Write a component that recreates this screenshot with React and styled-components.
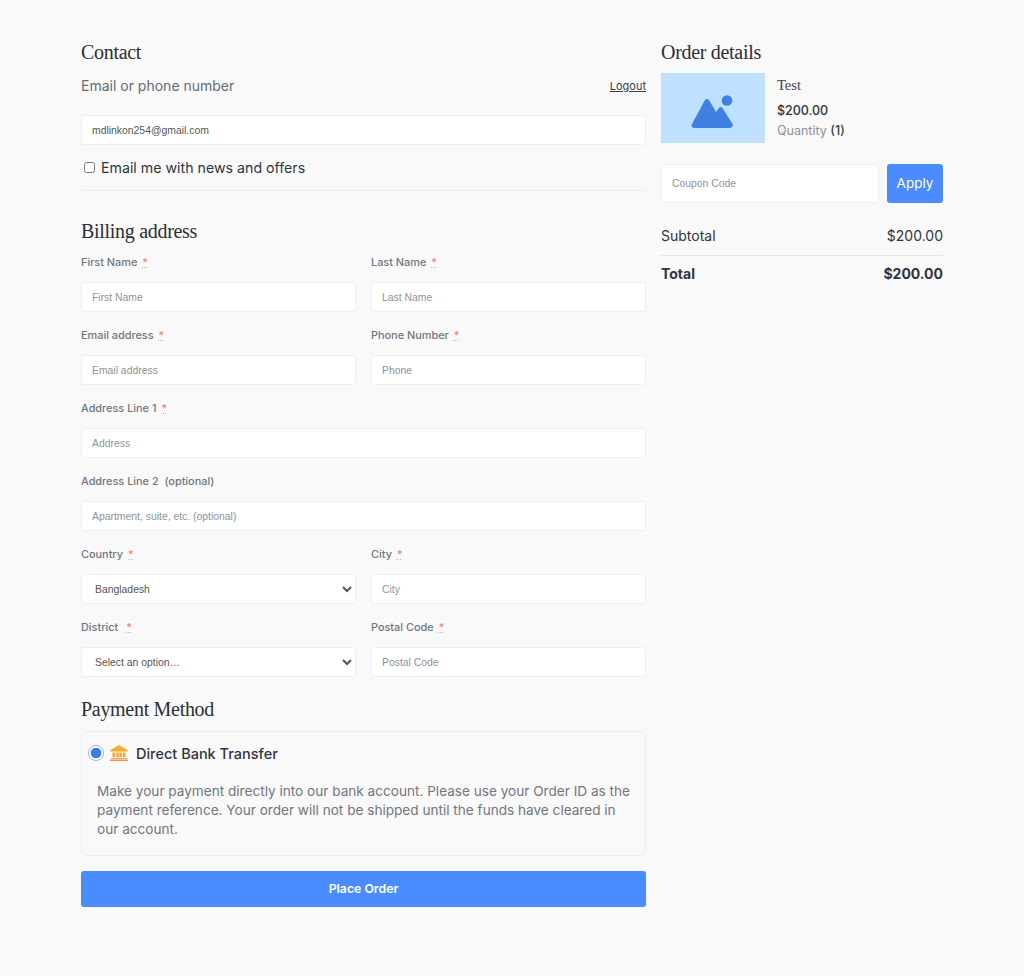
import styled, { createGlobalStyle } from 'styled-components';

const GlobalStyle = createGlobalStyle`
  * { box-sizing: border-box; }
  body {
    margin: 0;
    background: #f9f9f9;
    font-family: Inter, "Liberation Sans", sans-serif;
    color: #2f3542;
  }
`;

const Page = styled.div`
  width: 1024px;
  height: 976px;
  padding: 40px 81px 0;
  display: flex;
  align-items: flex-start;
  gap: 15px;
`;

const Main = styled.div`
  width: 565px;
`;

const Side = styled.aside`
  width: 282px;
`;

const Heading = styled.h2`
  margin: 0;
  font-family: "Liberation Serif", serif;
  font-weight: 400;
  font-size: 20px;
  letter-spacing: -0.3px;
  line-height: 24px;
  color: #2b2f38;
`;

const ContactRow = styled.div`
  margin-top: 10px;
  height: 22px;
  display: flex;
  justify-content: space-between;
  align-items: center;
`;

const ContactLabel = styled.span`
  font-size: 14px;
  color: #646b76;
`;

const Logout = styled.a`
  padding-top: 2px;
  font-size: 11px;
  color: #3a404b;
  text-decoration: underline;
`;

const Field = styled.input`
  display: block;
  width: 100%;
  height: 30px;
  padding: 0 10px;
  border: 1px solid #efefef;
  border-radius: 3px;
  background: #fff;
  font-family: "Liberation Sans", sans-serif;
  font-size: 10.4px;
  color: #555;
  outline: none;
  &::placeholder {
    color: #8f9298;
    opacity: 1;
  }
`;

const EmailField = styled(Field)`
  margin-top: 19px;
`;

const CheckRow = styled.label`
  margin-top: 11px;
  height: 22px;
  padding-left: 3px;
  display: flex;
  align-items: center;
  gap: 6px;
  font-size: 14.2px;
  color: #2f3542;
`;

const Check = styled.input`
  margin: 0;
  width: 11px;
  height: 11px;
`;

const Divider = styled.hr`
  margin: 12px 0 28px;
  border: 0;
  border-top: 1px solid #eeeeee;
`;

const FormGrid = styled.div`
  margin-top: 9px;
  display: grid;
  grid-template-columns: 275px 275px;
  column-gap: 15px;
  row-gap: 13px;
`;

const FormItem = styled.div`
  grid-column: ${(p) => (p.$wide ? '1 / -1' : 'auto')};
`;

const Label = styled.label`
  display: block;
  height: 20px;
  margin-bottom: 10px;
  font-size: 10.9px;
  font-weight: 500;
  line-height: 20px;
  color: #70767f;
  white-space: pre;
`;

const Required = styled.abbr`
  margin-left: 5px;
  color: #e8866a;
  text-decoration: underline dotted #bbb;
`;

const SelectBox = styled.select`
  display: block;
  width: 100%;
  height: 30px;
  padding: 0 0 0 9px;
  border: 1px solid #efefef;
  border-radius: 3px;
  background: #fff;
  font-family: "Liberation Sans", sans-serif;
  font-size: 10.4px;
  color: #555;
  outline: none;
`;

const PaymentHeading = styled(Heading)`
  margin-top: 20px;
`;

const PayCard = styled.div`
  margin-top: 10px;
  height: 125px;
  padding: 12px 6px;
  border: 1px solid #eeeeee;
  border-radius: 6px;
`;

const PayHead = styled.div`
  display: flex;
  align-items: center;
  height: 18px;
`;

const Radio = styled.input`
  appearance: none;
  margin: 0;
  width: 16px;
  height: 16px;
  border: 1.5px solid #8db8ff;
  border-radius: 50%;
  background: radial-gradient(circle, #3d7fe0 0 5px, #fff 5.6px);
`;

const BankIcon = styled.svg`
  margin-left: 6px;
  width: 18px;
  height: 16px;
`;

const PayTitle = styled.span`
  margin-left: 8px;
  font-size: 14.5px;
  font-weight: 500;
  color: #2f3542;
`;

const PayText = styled.p`
  margin: 20px 8px 0 9px;
  font-size: 13.6px;
  line-height: 19px;
  color: #71767f;
`;

const PlaceOrder = styled.button`
  display: block;
  width: 100%;
  height: 36px;
  margin-top: 15px;
  padding: 0 0 2px;
  border: 0;
  border-radius: 3px;
  background: #4a8cff;
  color: #fff;
  font-family: Inter, sans-serif;
  font-size: 12.3px;
  font-weight: 600;
`;

const Product = styled.div`
  margin-top: 9px;
  display: flex;
  gap: 12px;
`;

const Thumb = styled.div`
  width: 104px;
  height: 70px;
  padding: 7px 2px 0 0;
  background: #bfe0ff;
  display: flex;
  align-items: center;
  justify-content: center;
`;

const ProductInfo = styled.div`
  padding-top: 3px;
`;

const ProductName = styled.div`
  font-family: "Liberation Serif", serif;
  font-size: 14.5px;
  line-height: 18px;
  color: #3a3f48;
`;

const ProductPrice = styled.div`
  margin-top: 8px;
  font-size: 12.5px;
  font-weight: 500;
  line-height: 18px;
  color: #2f3542;
`;

const Quantity = styled.div`
  margin-top: 2px;
  font-size: 12.5px;
  line-height: 18px;
  color: #8d929b;
  & b {
    font-weight: 500;
    color: #3a3f48;
  }
`;

const CouponRow = styled.div`
  margin-top: 21px;
  display: flex;
  gap: 8px;
`;

const CouponField = styled(Field)`
  flex: 1;
  width: auto;
  height: 39px;
  padding-bottom: 1px;
`;

const ApplyBtn = styled.button`
  width: 56px;
  height: 39px;
  padding: 0 0 1px;
  border: 0;
  border-radius: 3px;
  background: #4a8cff;
  color: #fff;
  font-family: Inter, sans-serif;
  font-size: 13.5px;
`;

const SumRow = styled.div`
  display: flex;
  justify-content: space-between;
  align-items: center;
  height: ${(p) => (p.$total ? '36px' : '53px')};
  padding: ${(p) => (p.$total ? '0 0 2px' : '13px 0 0')};
  font-size: 14px;
  font-weight: ${(p) => (p.$total ? 700 : 400)};
  color: #2f3542;
  border-bottom: ${(p) => (p.$total ? '0' : '1px solid #e6e6e6')};
`;

const FIELDS = [
  { label: 'First Name', ph: 'First Name', req: true },
  { label: 'Last Name', ph: 'Last Name', req: true },
  { label: 'Email address', ph: 'Email address', req: true },
  { label: 'Phone Number', ph: 'Phone', req: true },
  { label: 'Address Line 1', ph: 'Address', req: true, wide: true },
  { label: 'Address Line 2  (optional)', ph: 'Apartment, suite, etc. (optional)', wide: true },
  { label: 'Country', select: 'Bangladesh', req: true },
  { label: 'City', ph: 'City', req: true },
  { label: 'District ', select: 'Select an option…', req: true },
  { label: 'Postal Code', ph: 'Postal Code', req: true },
];

const App = () => {
  return (
    <Page>
      <GlobalStyle />
      <Main>
        <Heading>Contact</Heading>
        <ContactRow>
          <ContactLabel>Email or phone number</ContactLabel>
          <Logout>Logout</Logout>
        </ContactRow>
        <EmailField defaultValue="mdlinkon254@gmail.com" />
        <CheckRow>
          <Check type="checkbox" />
          Email me with news and offers
        </CheckRow>
        <Divider />

        <Heading>Billing address</Heading>
        <FormGrid>
          {FIELDS.map((f) => (
            <FormItem key={f.label} $wide={f.wide}>
              <Label>
                {f.label}
                {f.req && <Required>*</Required>}
              </Label>
              {f.select ? (
                <SelectBox defaultValue={f.select}>
                  <option>{f.select}</option>
                </SelectBox>
              ) : (
                <Field placeholder={f.ph} />
              )}
            </FormItem>
          ))}
        </FormGrid>

        <PaymentHeading>Payment Method</PaymentHeading>
        <PayCard>
          <PayHead>
            <Radio type="radio" defaultChecked />
            <BankIcon viewBox="0 0 18 16">
              <path d="M9 0 L17.5 5 V6.5 H0.5 V5 Z" fill="#f5ab2f" />
              <path d="M2.5 7.5h2.6v4.5H2.5zM6.2 7.5h2.6v4.5H6.2zM9.4 7.5h2.6v4.5H9.4zM13 7.5h2.6v4.5H13z" fill="#f5ab2f" />
              <rect x="1" y="13" width="16" height="1.2" fill="#f5ab2f" />
              <rect y="14.6" width="18" height="1.4" fill="#f08f5a" />
            </BankIcon>
            <PayTitle>Direct Bank Transfer</PayTitle>
          </PayHead>
          <PayText>
            Make your payment directly into our bank account. Please use your Order ID as the payment reference. Your order will not be shipped until the funds have cleared in our account.
          </PayText>
        </PayCard>
        <PlaceOrder>Place Order</PlaceOrder>
      </Main>

      <Side>
        <Heading>Order details</Heading>
        <Product>
          <Thumb>
            <svg width="42" height="33" viewBox="0 0 42 33">
              <circle cx="36" cy="5.5" r="5.3" fill="#3f80e0" />
              <path d="M3 33 a2.5 2.5 0 0 1 -2 -4 L14 5 a2.5 2.5 0 0 1 4 0 L25 17 L28 13 a2 2 0 0 1 3.4 0 L41 28 a3 3 0 0 1 -2 5 Z" fill="#3f80e0" />
            </svg>
          </Thumb>
          <ProductInfo>
            <ProductName>Test</ProductName>
            <ProductPrice>$200.00</ProductPrice>
            <Quantity>Quantity <b>(1)</b></Quantity>
          </ProductInfo>
        </Product>
        <CouponRow>
          <CouponField placeholder="Coupon Code" />
          <ApplyBtn>Apply</ApplyBtn>
        </CouponRow>
        <SumRow>
          <span>Subtotal</span>
          <span>$200.00</span>
        </SumRow>
        <SumRow $total>
          <span>Total</span>
          <span>$200.00</span>
        </SumRow>
      </Side>
    </Page>
  );
};

export default App;
